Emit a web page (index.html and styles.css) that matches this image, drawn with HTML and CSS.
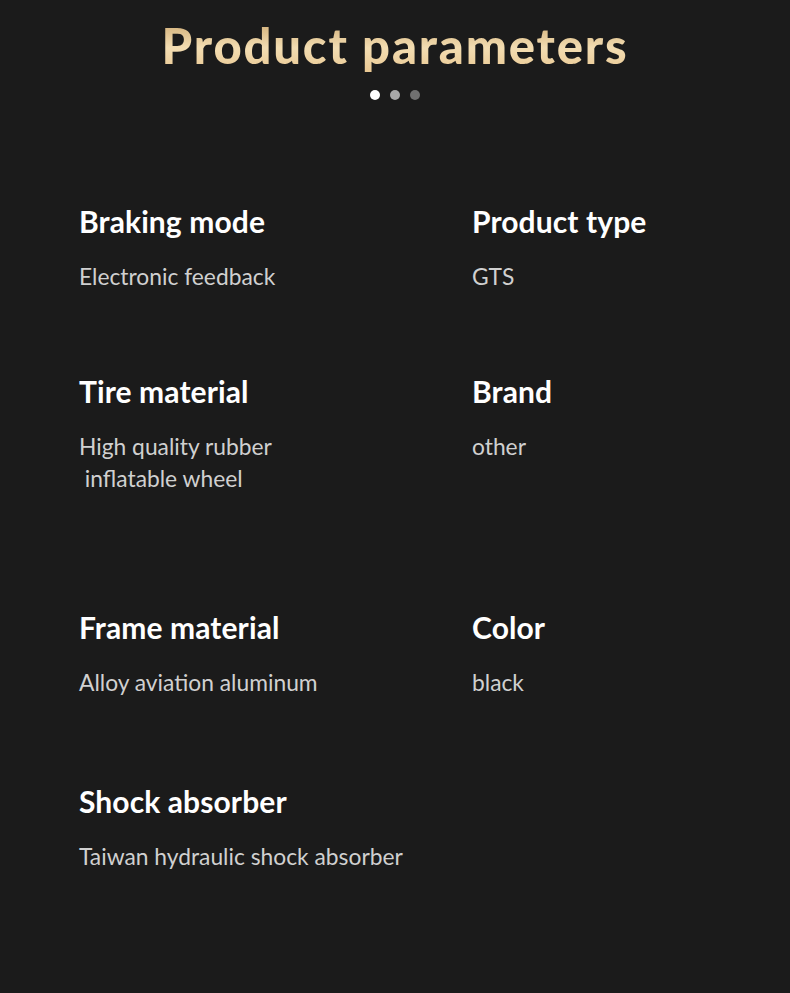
FILE: index.html
```html
<!DOCTYPE html>
<html lang="en">
<head>
<meta charset="utf-8">
<title>Product parameters</title>
<link rel="stylesheet" href="styles.css">
</head>
<body>
<div class="page">
  <header class="top">
    <h1 class="title">Product parameters</h1>
    <div class="dots">
      <span class="dot dot-1"></span>
      <span class="dot dot-2"></span>
      <span class="dot dot-3"></span>
    </div>
  </header>
  <section class="params">
    <div class="item r1">
      <div class="name">Braking mode</div>
      <div class="value">Electronic feedback</div>
    </div>
    <div class="item r1">
      <div class="name">Product type</div>
      <div class="value">GTS</div>
    </div>
    <div class="item r2">
      <div class="name">Tire material</div>
      <div class="value">High quality rubber<br>&nbsp;inflatable wheel</div>
    </div>
    <div class="item r2">
      <div class="name">Brand</div>
      <div class="value">other</div>
    </div>
    <div class="item r3">
      <div class="name">Frame material</div>
      <div class="value">Alloy aviation aluminum</div>
    </div>
    <div class="item r3">
      <div class="name">Color</div>
      <div class="value">black</div>
    </div>
    <div class="item r4">
      <div class="name">Shock absorber</div>
      <div class="value">Taiwan hydraulic shock absorber</div>
    </div>
  </section>
</div>
</body>
</html>
```
FILE: styles.css
```css
html, body {
  margin: 0;
  padding: 0;
  background: #1b1b1b;
}
.page {
  width: 790px;
  height: 993px;
  background: #1b1b1b;
  font-family: "Lato", "Liberation Sans", sans-serif;
  overflow: hidden;
}
.top {
  display: flex;
  flex-direction: column;
  align-items: center;
  padding-top: 16px;
}
.title {
  margin: 0;
  font-family: "Lato", sans-serif;
  font-weight: 900;
  font-size: 49px;
  line-height: 58px;
  letter-spacing: 1.8px;
  background: linear-gradient(180deg, #c9a46b 0%, #f3ddb2 55%, #e8c690 100%);
  -webkit-background-clip: text;
  background-clip: text;
  color: transparent;
}
.dots {
  display: flex;
  gap: 10px;
  margin-top: 16px;
}
.dot {
  width: 10px;
  height: 10px;
  border-radius: 50%;
}
.dot-1 { background: #ffffff; }
.dot-2 { background: #a9a9a9; }
.dot-3 { background: #707070; }
.params {
  display: grid;
  grid-template-columns: 393px 1fr;
  grid-template-rows: 170px 236px 174px auto;
  padding-left: 79px;
  margin-top: 104px;
}
.name {
  font-weight: 700;
  font-size: 30px;
  line-height: 34px;
  color: #ffffff;
  letter-spacing: 0.1px;
}
.value {
  margin-top: 22px;
  font-size: 22.8px;
  line-height: 32px;
  color: #d0d0d0;
}
```
